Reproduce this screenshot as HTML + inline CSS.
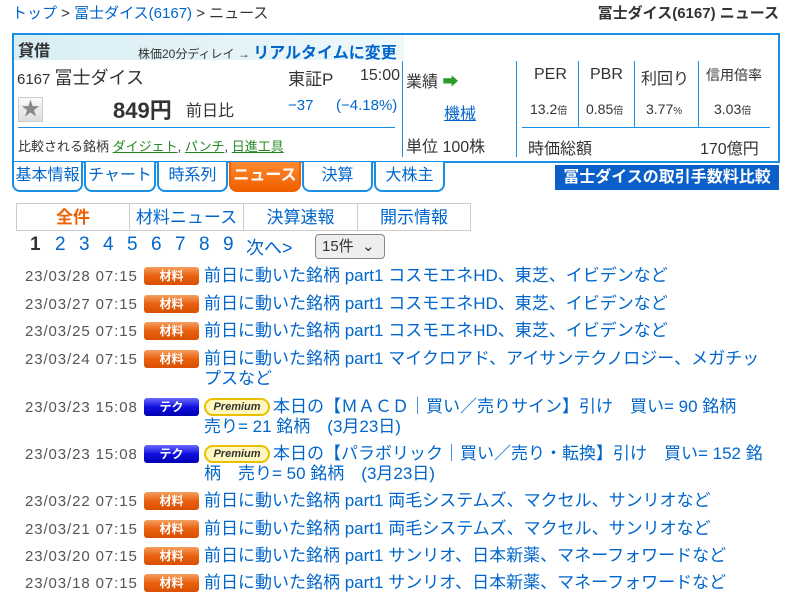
<!DOCTYPE html>
<html><head><meta charset="utf-8"><style>
*{margin:0;padding:0;box-sizing:border-box}
body{width:791px;height:593px;overflow:hidden;background:#fff;font-family:"Liberation Sans","Noto Sans CJK JP",sans-serif;color:#333;position:relative}
.a{position:absolute;white-space:nowrap}
.bl{color:#0066cc}
.g{color:#228822;text-decoration:underline}
.vl{position:absolute;width:1px;background:#1a8fe6}
.tab{position:absolute;top:162px;height:30px;border:2px solid #1a8fe6;border-top:none;border-radius:0 0 8px 8px;background:#fff;color:#0066cc;font-size:16px;text-align:center;line-height:27px;white-space:nowrap;overflow:hidden}
.sub{position:absolute;top:203px;height:28px;border:1px solid #ccc;font-size:17px;text-align:center;line-height:27px;color:#0066cc;background:#fff;white-space:nowrap}
.row{position:absolute;left:0;width:791px;font-size:17px;line-height:20px}
.dt{position:absolute;left:25px;top:1px;font-size:15px;letter-spacing:0.9px;color:#555;line-height:20px}
.bd{position:absolute;left:144px;top:1px;width:55px;height:18px;border-radius:3px;color:#fff;font-size:12px;font-weight:bold;text-align:center;line-height:18px}
.zr{background:linear-gradient(#f5a060,#e86010 50%,#d85000)}
.tk{background:linear-gradient(#6a6aff,#1010e0 50%,#0000b0)}
.tt{position:absolute;left:204px;color:#0066cc;white-space:normal;width:568px}
.pr{display:inline-block;width:66px;height:18px;border:2px solid #e8c000;border-radius:9px;background:#fff8c0;font-size:11px;font-weight:bold;font-style:italic;color:#333;text-align:center;line-height:14px;vertical-align:2px;margin-right:3px}
.pg{position:absolute;top:234px;font-size:19px;color:#0066cc}
</style></head><body>
<div class="a" style="left:12px;top:2px;font-size:15px"><span class="bl">トップ</span> &gt; <span class="bl">冨士ダイス(6167)</span> &gt; ニュース</div>
<div class="a" style="right:12px;top:2px;font-size:15px;font-weight:bold">冨士ダイス(6167) ニュース</div>

<div class="a" style="left:12px;top:33px;width:768px;height:130px;border:2px solid #1a8fe6"></div>
<div class="a" style="left:14px;top:35px;width:390px;height:25px;background:linear-gradient(90deg,#d8eef4,#eef8fa)"></div>
<div class="a" style="left:18px;top:37px;font-size:16px;font-weight:bold">貸借</div>
<div class="a" style="left:138px;top:39px;font-size:12px">株価20分ディレイ → <span style="color:#0066cc;font-weight:bold;font-size:16px">リアルタイムに変更</span></div>
<div class="a" style="left:17px;top:64px;font-size:15px">6167 <span style="font-size:18px">冨士ダイス</span></div>
<div class="a" style="left:288px;top:65px;font-size:17px">東証P</div>
<div class="a" style="left:360px;top:67px;font-size:16px">15:00</div>
<div class="a" style="left:18px;top:97px;width:25px;height:25px;border:1px solid #ccc;background:linear-gradient(#fafafa,#ddd);color:#888;font-size:19px;text-align:center;line-height:23px">★</div>
<div class="a" style="left:113px;top:93px;font-size:22px;font-weight:bold">849円</div>
<div class="a" style="left:186px;top:97px;font-size:16px">前日比</div>
<div class="a bl" style="left:288px;top:97px;font-size:15px">−37</div>
<div class="a bl" style="left:336px;top:97px;font-size:15px">(−4.18%)</div>
<div class="a" style="left:18px;top:127px;width:377px;height:1px;background:#1a8fe6"></div>
<div class="a" style="left:18px;top:136px;font-size:13px">比較される銘柄 <span class="g">ダイジェト</span>, <span class="g">パンチ</span>, <span class="g">日進工具</span></div>
<div class="vl" style="left:402px;top:61px;height:96px"></div>
<div class="vl" style="left:516px;top:61px;height:96px"></div>
<div class="a" style="left:406px;top:68px;font-size:16px">業績 <span style="color:#2a9a2a">➡</span></div>
<div class="a bl" style="left:444px;top:100px;font-size:16px;text-decoration:underline">機械</div>
<div class="a" style="left:406px;top:133px;font-size:16px">単位 100株</div>
<div class="vl" style="left:578px;top:61px;height:66px"></div>
<div class="vl" style="left:634px;top:61px;height:66px"></div>
<div class="vl" style="left:698px;top:61px;height:66px"></div>
<div class="a" style="left:522px;top:127px;width:248px;height:1px;background:#1a8fe6"></div>
<div class="a" style="left:534px;top:66px;font-size:16px">PER</div>
<div class="a" style="left:590px;top:66px;font-size:16px">PBR</div>
<div class="a" style="left:641px;top:65px;font-size:16px">利回り</div>
<div class="a" style="left:706px;top:65px;font-size:14px">信用倍率</div>
<div class="a" style="left:530px;top:101px;font-size:14px">13.2<small style="font-size:10px">倍</small></div>
<div class="a" style="left:586px;top:101px;font-size:14px">0.85<small style="font-size:10px">倍</small></div>
<div class="a" style="left:646px;top:101px;font-size:14px">3.77<small style="font-size:10px">%</small></div>
<div class="a" style="left:714px;top:101px;font-size:14px">3.03<small style="font-size:10px">倍</small></div>
<div class="a" style="left:528px;top:135px;font-size:16px">時価総額</div>
<div class="a" style="left:700px;top:135px;font-size:16px">170億円</div>

<div class="tab" style="left:12px;width:71px">基本情報</div>
<div class="tab" style="left:84px;width:72px">チャート</div>
<div class="tab" style="left:157px;width:71px">時系列</div>
<div class="tab" style="left:229px;width:72px;background:linear-gradient(#ff8a30,#f06000);color:#fff;border-color:#f06000;font-weight:bold">ニュース</div>
<div class="tab" style="left:302px;width:71px">決算</div>
<div class="tab" style="left:374px;width:71px">大株主</div>
<div class="a" style="left:555px;top:165px;width:224px;height:25px;background:#0a5fc8;color:#fff;font-weight:bold;font-size:16px;text-align:center;line-height:25px">冨士ダイスの取引手数料比較</div>

<div class="sub" style="left:16px;width:114px;color:#f06000;font-weight:bold">全件</div>
<div class="sub" style="left:129px;width:115px">材料ニュース</div>
<div class="sub" style="left:243px;width:115px">決算速報</div>
<div class="sub" style="left:357px;width:114px">開示情報</div>

<div class="pg" style="left:30px;color:#333;font-weight:bold">1</div>
<div class="pg" style="left:55px">2</div>
<div class="pg" style="left:79px">3</div>
<div class="pg" style="left:103px">4</div>
<div class="pg" style="left:127px">5</div>
<div class="pg" style="left:151px">6</div>
<div class="pg" style="left:175px">7</div>
<div class="pg" style="left:199px">8</div>
<div class="pg" style="left:223px">9</div>
<div class="pg" style="left:246px;font-size:18px">次へ&gt;</div>
<div class="a" style="left:315px;top:234px;width:70px;height:25px;border:1px solid #888;border-radius:4px;background:#eee;font-size:15px;line-height:23px;padding-left:6px">15件 &nbsp;⌄</div>

<div class="row" style="top:266px"><div class="dt">23/03/28 07:15</div><div class="bd zr">材料</div><div class="tt">前日に動いた銘柄 part1 コスモエネHD、東芝、イビデンなど</div></div>
<div class="row" style="top:294px"><div class="dt">23/03/27 07:15</div><div class="bd zr">材料</div><div class="tt">前日に動いた銘柄 part1 コスモエネHD、東芝、イビデンなど</div></div>
<div class="row" style="top:321px"><div class="dt">23/03/25 07:15</div><div class="bd zr">材料</div><div class="tt">前日に動いた銘柄 part1 コスモエネHD、東芝、イビデンなど</div></div>
<div class="row" style="top:349px"><div class="dt">23/03/24 07:15</div><div class="bd zr">材料</div><div class="tt">前日に動いた銘柄 part1 マイクロアド、アイサンテクノロジー、メガチップスなど</div></div>
<div class="row" style="top:397px"><div class="dt">23/03/23 15:08</div><div class="bd tk">テク</div><div class="tt"><span class="pr">Premium</span>本日の【ＭＡＣＤ｜買い／売りサイン】引け　買い= 90 銘柄<br>売り= 21 銘柄　(3月23日)</div></div>
<div class="row" style="top:444px"><div class="dt">23/03/23 15:08</div><div class="bd tk">テク</div><div class="tt"><span class="pr">Premium</span>本日の【パラボリック｜買い／売り・転換】引け　買い= 152 銘柄　売り= 50 銘柄　(3月23日)</div></div>
<div class="row" style="top:491px"><div class="dt">23/03/22 07:15</div><div class="bd zr">材料</div><div class="tt">前日に動いた銘柄 part1 両毛システムズ、マクセル、サンリオなど</div></div>
<div class="row" style="top:519px"><div class="dt">23/03/21 07:15</div><div class="bd zr">材料</div><div class="tt">前日に動いた銘柄 part1 両毛システムズ、マクセル、サンリオなど</div></div>
<div class="row" style="top:546px"><div class="dt">23/03/20 07:15</div><div class="bd zr">材料</div><div class="tt">前日に動いた銘柄 part1 サンリオ、日本新薬、マネーフォワードなど</div></div>
<div class="row" style="top:573px"><div class="dt">23/03/18 07:15</div><div class="bd zr">材料</div><div class="tt">前日に動いた銘柄 part1 サンリオ、日本新薬、マネーフォワードなど</div></div>
</body></html>
